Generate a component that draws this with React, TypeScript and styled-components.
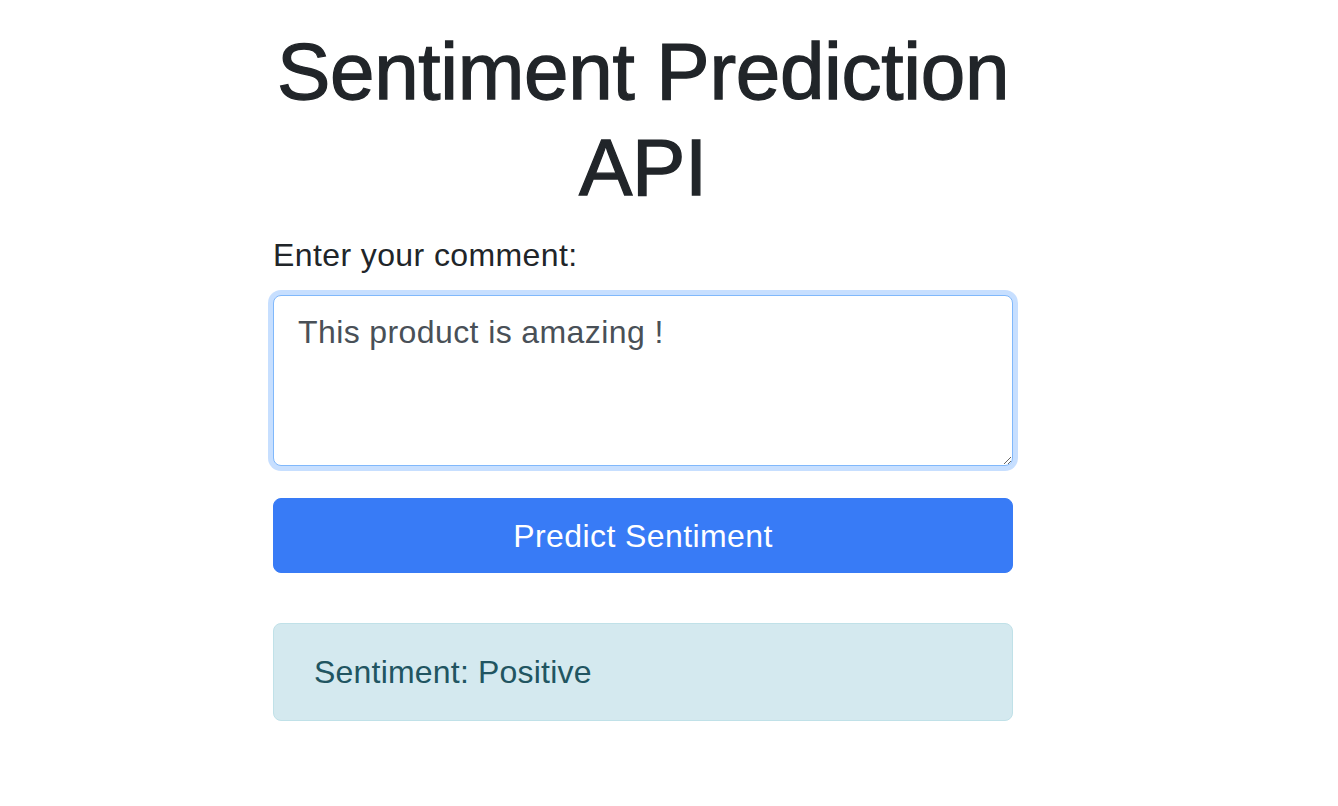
import React, { useState } from "react";
import styled, { createGlobalStyle } from "styled-components";

const GlobalStyle = createGlobalStyle`
  html, body {
    margin: 0;
    padding: 0;
    background: #ffffff;
  }
  body {
    font-family: "Liberation Sans", Arial, Helvetica, sans-serif;
    font-size: 32px;
    line-height: 1.5;
    letter-spacing: 0.4px;
    color: #212529;
  }
  * { box-sizing: border-box; }
`;

const Container = styled.main`
  width: 740px;
  margin: 0 0 0 273px;
  padding-top: 24px;
  display: flex;
  flex-direction: column;
`;

const Title = styled.h1`
  margin: 0 0 15px;
  font-family: "Liberation Sans", Arial, sans-serif;
  font-size: 80px;
  font-weight: 400;
  line-height: 1.2;
  letter-spacing: -0.3px;
  -webkit-text-stroke: 1.3px #212529;
  text-align: center;
  color: #212529;
`;

const Form = styled.form`
  display: flex;
  flex-direction: column;
`;

const Label = styled.label`
  display: block;
  margin-bottom: 16px;
  font-size: 32px;
  line-height: 48px;
  color: #212529;
`;

const TextArea = styled.textarea`
  display: block;
  width: 100%;
  height: 171px;
  padding: 12px 24px;
  font-family: inherit;
  font-size: 32px;
  line-height: 48px;
  letter-spacing: 0.4px;
  color: #495057;
  background: #ffffff;
  border: 1px solid #80b8fb;
  border-radius: 8px;
  box-shadow: 0 0 0 5px rgba(0, 110, 255, 0.22);
  outline: none;
  resize: vertical;
  margin: 0 0 32px;
`;

const Button = styled.button`
  display: block;
  width: 100%;
  height: 75px;
  padding: 12px 24px;
  font-family: inherit;
  font-size: 32px;
  line-height: 48px;
  letter-spacing: 0.4px;
  color: #ffffff;
  background: #387bf6;
  border: 1px solid #387bf6;
  border-radius: 8px;
  cursor: pointer;
`;

const Alert = styled.div<{ $tone: "info" }>`
  margin-top: 50px;
  padding: 24px 40px;
  font-size: 32px;
  line-height: 48px;
  letter-spacing: 0.2px;
  border-radius: 8px;
  color: #215561;
  background: #d4e9ef;
  border: 1px solid #c0e1e8;
`;

export default function App() {
  const [comment, setComment] = useState("This product is amazing !");
  return (
    <>
      <GlobalStyle />
      <Container>
        <Title>Sentiment Prediction API</Title>
        <Form onSubmit={(e) => e.preventDefault()}>
          <Label htmlFor="comment">Enter your comment:</Label>
          <TextArea
            id="comment"
            rows={3}
            value={comment}
            onChange={(e) => setComment(e.target.value)}
          />
          <Button type="submit">Predict Sentiment</Button>
        </Form>
        <Alert $tone="info">Sentiment: Positive</Alert>
      </Container>
    </>
  );
}
